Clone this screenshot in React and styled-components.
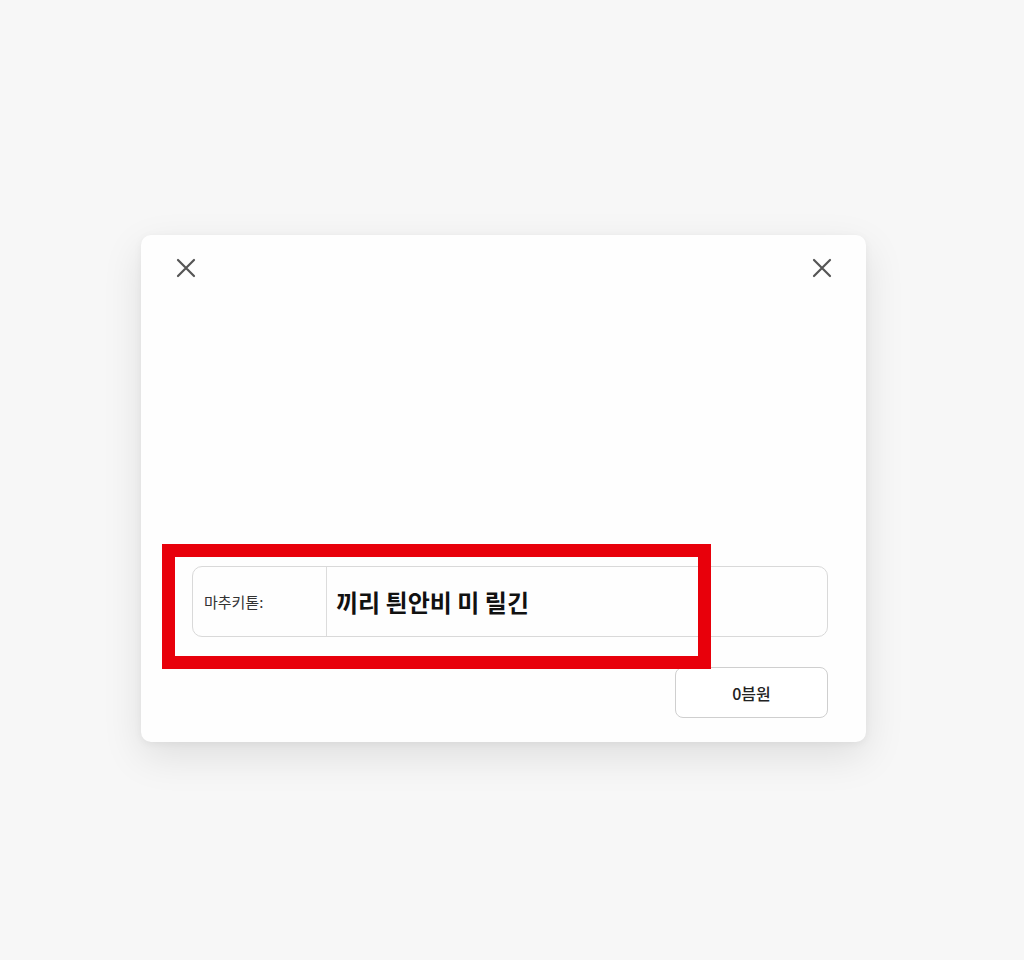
import styled, { createGlobalStyle } from 'styled-components';

const Global = createGlobalStyle`
    html, body{
        margin: 0;
        background: #f7f7f7;
        font-family: "Noto Sans CJK KR", "Noto Sans", sans-serif;
    }
`

const Page = styled.div`
    box-sizing: border-box;
    display: flex;
    height: 960px;
    padding: 235px 0 0 141px;
`

const Modal = styled.div`
    background: #fefefe;
    border-radius: 10px;
    box-shadow: 0 14px 40px rgba(0,0,0,0.10), 0 2px 8px rgba(0,0,0,0.05);
    box-sizing: border-box;
    display: flex;
    flex-direction: column;
    height: 507px;
    padding: 21px 38px 24px 51px;
    position: relative;
    width: 725px;
`

const Header = styled.div`
    display: flex;
    justify-content: space-between;
    margin: 0 -6px 0 -18px;
`

const CloseButton = styled.button`
    background: none;
    border: 0;
    color: #555;
    cursor: pointer;
    display: flex;
    height: 24px;
    padding: 0;
    width: 24px;
`

const Body = styled.div`
    flex: 1;
`

const Field = styled.div`
    border: 1px solid #d9d9d9;
    border-radius: 10px;
    box-sizing: border-box;
    display: flex;
    height: 71px;
`

const Label = styled.span`
    align-items: center;
    border-right: 1px solid #dcdcdc;
    color: #333;
    display: flex;
    font-size: 15px;
    padding-left: 11px;
    width: 122px;
`

const Value = styled.span`
    align-items: center;
    color: #111;
    display: flex;
    font-size: 24px;
    font-weight: 700;
    padding-left: 9px;
`

const Actions = styled.div`
    display: flex;
    justify-content: flex-end;
    margin-top: 30px;
`

const Button = styled.button`
    background: #fff;
    border: 1px solid #cfcfcf;
    border-radius: 8px;
    color: #222;
    cursor: pointer;
    font-family: inherit;
    font-size: 16px;
    font-weight: 500;
    height: 51px;
    width: 153px;
`

const Highlight = styled.div`
    border: 13px solid #e8000b;
    box-sizing: border-box;
    height: 125px;
    left: 21px;
    pointer-events: none;
    position: absolute;
    top: 309px;
    width: 549px;
`

function XIcon(){
    return(
        <svg width='24' height='24' viewBox='0 0 24 24' fill='none' stroke='currentColor' strokeWidth='2.2' strokeLinecap='round'>
            <path d='M4 4L20 20M20 4L4 20' />
        </svg>
    )
}

export default function App(){
    return(
        <Page>
            <Global />
            <Modal>
                <Header>
                    <CloseButton aria-label='닫기'><XIcon /></CloseButton>
                    <CloseButton aria-label='닫기'><XIcon /></CloseButton>
                </Header>
                <Body />
                <Field>
                    <Label>마추키톧:</Label>
                    <Value>끼리 틘안비 미 릴긴</Value>
                </Field>
                <Actions>
                    <Button>0븜원</Button>
                </Actions>
                <Highlight />
            </Modal>
        </Page>
    );
}
